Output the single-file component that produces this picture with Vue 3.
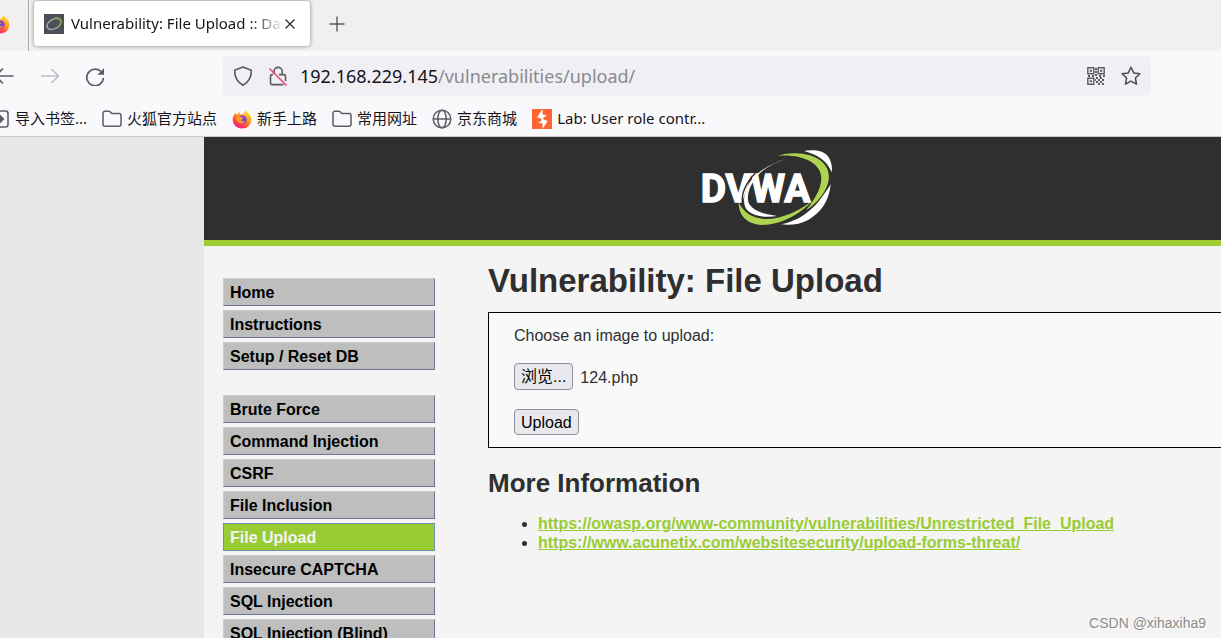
<script setup>
const bookmarks = [
  { icon: 'import', text: '导入书签...' },
  { icon: 'folder', text: '火狐官方站点' },
  { icon: 'firefox', text: '新手上路' },
  { icon: 'folder', text: '常用网址' },
  { icon: 'globe', text: '京东商城' },
  { icon: 'burp', text: 'Lab: User role contr...' },
]

const menu = [
  ['Home', 'Instructions', 'Setup / Reset DB'],
  [
    'Brute Force',
    'Command Injection',
    'CSRF',
    'File Inclusion',
    'File Upload',
    'Insecure CAPTCHA',
    'SQL Injection',
    'SQL Injection (Blind)',
  ],
]

const links = [
  'https://owasp.org/www-community/vulnerabilities/Unrestricted_File_Upload',
  'https://www.acunetix.com/websitesecurity/upload-forms-threat/',
]
</script>

<template>
  <div class="window">
    <svg class="defs" aria-hidden="true">
      <defs>
        <linearGradient id="fire" x1="0.8" y1="0" x2="0.2" y2="1">
          <stop offset="0" stop-color="#fff04a" />
          <stop offset="0.4" stop-color="#ff9a1f" />
          <stop offset="0.75" stop-color="#ff3b4e" />
          <stop offset="1" stop-color="#e6178f" />
        </linearGradient>
        <symbol id="firefox" viewBox="0 0 20 20">
          <path fill="url(#fire)" d="M3.2 4.2c.6.8 1 1.200 1.800 1.500C6 4.200 7 3.600 8 3.200c-.2 1 .1 1.700.8 2.300 1.600-.2 2.500-.6 3.200-1.500C12.600 2.800 13.200 1.500 14 .6c.4 1.800 1.400 2.800 2.600 4 2 1.800 2.900 4 2.700 6.400-.4 5-4.200 8.500-9.300 8.500S.8 15.800.7 10.800c0-2.500.9-4.800 2.500-6.600z" />
          <circle cx="10.400" cy="10.600" r="4.200" fill="#7542e5" />
          <path fill="#ff9a1f" d="M4 8.500c2-1.600 4.200-1.200 5.400-.2 1 .2 1.800.2 2.200.7-.5 1-1.800 1.100-2.400 2 .3 1.300 2.200 1.600 4 .8-1 2.200-3.200 3-5.400 2.500C5.500 13.700 4 11.500 4 8.500z" />
        </symbol>
      </defs>
    </svg>

    <header class="tabs">
      <div class="pinned">
        <svg class="icon20"><use href="#firefox" /></svg>
      </div>
      <div class="tab">
        <svg class="icon20" viewBox="0 0 20 20">
          <rect width="20" height="20" fill="#4a5058" />
          <ellipse cx="10" cy="10" rx="7.500" ry="4.800" transform="rotate(-28 10 10)" fill="none" stroke="#a4abb0" stroke-width="1.400" />
          <path d="M9 5c4-2 8-1 8 2.500 0 2-1 4-3 5.500" fill="none" stroke="#8da04e" stroke-width="1.500" />
        </svg>
        <span class="title">Vulnerability: File Upload :: Damn Vulnerable</span>
        <button class="plain close" aria-label="Close tab">
          <svg width="12" height="12" viewBox="0 0 12 12"><path d="M1.500 1.500l9 9M10.500 1.500l-9 9" stroke="#2b2a33" stroke-width="1.300" /></svg>
        </button>
      </div>
      <button class="plain" aria-label="New tab">
        <svg width="16" height="16" viewBox="0 0 16 16"><path d="M8 .5v15M.5 8h15" stroke="#5b5b66" stroke-width="1.400" /></svg>
      </button>
    </header>

    <nav class="toolbar">
      <button class="plain back" aria-label="Back">
        <svg class="icon20" viewBox="0 0 20 20"><path d="M19.500 10H1.500M9 2.500L1.500 10 9 17.500" fill="none" stroke="#5b5b66" stroke-width="1.600" /></svg>
      </button>
      <button class="plain forward" aria-label="Forward">
        <svg class="icon20" viewBox="0 0 20 20"><path d="M1 10h17.500M11.500 3l7 7-7 7" fill="none" stroke="#bdbdc4" stroke-width="1.600" /></svg>
      </button>
      <button class="plain reload" aria-label="Reload">
        <svg class="icon20" viewBox="0 0 20 20">
          <path d="M18.400 12a8.300 8.300 0 1 1-2.600-6.600" fill="none" stroke="#5b5b66" stroke-width="1.700" />
          <path d="M19 2.200v6.600h-6.600z" fill="#5b5b66" />
        </svg>
      </button>
      <div class="address">
        <svg class="icon20" viewBox="0 0 20 20"><path d="M10 1l8.300 3.300c.2 6.400-2.300 11.600-8.300 14.900C4 15.900 1.500 10.700 1.700 4.300z" fill="none" stroke="#5b5b66" stroke-width="1.600" stroke-linejoin="round" /></svg>
        <svg class="icon20 lock" viewBox="0 0 20 20">
          <path d="M6 8V5.500a4 4 0 0 1 8.200 0V8M11 8.600h5a1.500 1.500 0 0 1 1.500 1.500v5M15.500 18.600H4a1.500 1.500 0 0 1-1.500-1.500v-7A1.500 1.500 0 0 1 4 8.600h1" fill="none" stroke="#5b5b66" stroke-width="1.600" />
          <path d="M1.500 2.500l17 17" stroke="#f0426b" stroke-width="1.500" />
        </svg>
        <p class="url">192.168.229.145<span>/vulnerabilities/upload/</span></p>
        <svg class="qr" width="18" height="18" viewBox="0 0 18 18" fill="none" stroke="#5b5b66" stroke-width="1.400">
          <path d="M.8.800h6v6h-6zM11.200.800h6v6h-6zM.8 11.200h6v6h-6z" />
          <path d="M3 3h1.600v1.600H3zM13.400 3H15v1.600h-1.600zM3 13.400h1.600V15H3z" fill="#5b5b66" stroke-width=".6" />
          <path d="M8 2h2M8 5h2M1 9h2M5 9h2M8 8h2M12 9h2M16 9h2M9 11h2M13 11h2M11 13h2M15 13h2M9 15h2M13 15h2M11 17h2M15 17h2M8 13h1" stroke-width="2" />
        </svg>
        <svg class="icon20" viewBox="0 0 20 20"><path d="M10 1.200l2.700 5.700 6.200.8-4.500 4.300 1.100 6.200-5.500-3-5.500 3 1.100-6.200L1.100 7.700l6.200-.8z" fill="none" stroke="#4b4b55" stroke-width="1.500" stroke-linejoin="round" /></svg>
      </div>
    </nav>

    <nav class="bookmarks">
      <a v-for="b in bookmarks" :key="b.text" href="#">
        <svg v-if="b.icon === 'import'" class="icon20" viewBox="0 0 20 20">
          <rect x="2" y="2" width="16" height="16" rx="2.500" fill="none" stroke="#5b5b66" stroke-width="1.600" />
          <path d="M3 8h6V4.500l5.500 5.500L9 15.500V12H3z" fill="#5b5b66" />
        </svg>
        <svg v-else-if="b.icon === 'folder'" class="icon20" viewBox="0 0 20 20">
          <path d="M1 4.200a2 2 0 0 1 2-2h3.800c.7 0 1.200.2 1.600.7l1.400 1.500h7.200a2 2 0 0 1 2 2v8.800a2 2 0 0 1-2 2H3a2 2 0 0 1-2-2z" fill="none" stroke="#5b5b66" stroke-width="1.500" />
        </svg>
        <svg v-else-if="b.icon === 'firefox'" class="icon20"><use href="#firefox" /></svg>
        <svg v-else-if="b.icon === 'globe'" class="icon20" viewBox="0 0 20 20" fill="none" stroke="#5b5b66" stroke-width="1.500">
          <circle cx="10" cy="10" r="8.800" />
          <ellipse cx="10" cy="10" rx="4.200" ry="8.800" />
          <path d="M1.200 10h17.600" />
        </svg>
        <svg v-else class="icon20" viewBox="0 0 20 20">
          <rect width="20" height="20" fill="#ff6633" />
          <path d="M10.500 0L5 8.200l4.500 1.600v2L6 13.500l4.500 1v5.500l5-8-4.200-1.800V8.600l3.700-1.800-4.500-1.500z" fill="#fff" />
        </svg>
        <span>{{ b.text }}</span>
      </a>
    </nav>

    <main class="viewport">
      <div class="page">
        <div class="banner">
          <svg width="134" height="80" viewBox="60 30 402 240" role="img" aria-label="DVWA">
            <path fill="#fff" d="M372 42C396 38 432 38 447 62 456 78 457 92 455 106 446 84 430 58 372 42z" />
            <path fill="#fff" d="M452 142C448 190 424 226 386 248 360 262 330 266 304 262 350 252 384 230 412 198 430 176 442 158 452 142z" />
            <path fill="#aed351" d="M292 56C340 42 396 48 426 74 450 96 454 128 434 162 420 186 400 206 378 220 398 194 424 160 424 122 422 76 366 50 292 56z" />
            <path fill="#aed351" d="M176 196C176 232 196 262 246 264 304 264 362 230 396 192 356 222 304 248 254 246 216 244 190 226 176 196z" />
            <text class="logo-text" x="62" y="194">DVWA</text>
            <path fill="#fff" d="M318 65C282 76 234 100 212 132 188 166 186 206 204 222 226 240 262 242 292 237 250 232 222 222 208 202 196 178 210 144 232 116 256 90 286 76 318 65z" />
            <path fill="none" stroke="#2f2f2f" stroke-width="4" d="M226 108C200 136 184 168 187 196" />
          </svg>
        </div>

        <div class="columns">
          <nav class="menu">
            <ul v-for="(group, i) in menu" :key="i">
              <li v-for="item in group" :key="item">
                <a href="#" :class="{ selected: item === 'File Upload' }">{{ item }}</a>
              </li>
            </ul>
          </nav>

          <section class="body">
            <h1>Vulnerability: File Upload</h1>
            <form class="box" @submit.prevent>
              <label for="upload">Choose an image to upload:</label>
              <div class="file">
                <input id="upload" type="file" class="native" />
                <label class="btn browse" for="upload">浏览...</label>
                <span>124.php</span>
              </div>
              <button class="btn" type="submit">Upload</button>
            </form>
            <h2>More Information</h2>
            <ul class="links">
              <li v-for="l in links" :key="l"><a :href="l">{{ l }}</a></li>
            </ul>
          </section>
        </div>
      </div>
      <span class="watermark">CSDN @xihaxiha9</span>
    </main>
  </div>
</template>

<style>
body {
  margin: 0;
  overflow: hidden;
}
</style>

<style scoped>
.window {
  display: flex;
  flex-direction: column;
  height: 100vh;
  overflow: hidden;
  background: #f9f9fb;
  color: #15141a;
  font-family: "Noto Sans", "Noto Sans CJK SC", sans-serif;
  font-size: 15px;
}
.defs {
  position: absolute;
  width: 0;
  height: 0;
}
.icon20 {
  width: 20px;
  height: 20px;
  flex: none;
}
.plain {
  display: flex;
  padding: 0;
  border: 0;
  background: none;
}
.tabs {
  flex: none;
  display: flex;
  align-items: center;
  box-sizing: border-box;
  height: 51px;
  padding-bottom: 4px;
  background: #f0f0f0;
}
.pinned {
  display: flex;
  align-items: center;
  align-self: flex-start;
  width: 28px;
  height: 51px;
  border-right: 1px solid #aaaaae;
}
.pinned svg {
  margin: 0 0 4px -10px;
}
.tab {
  display: flex;
  align-items: center;
  align-self: flex-start;
  box-sizing: border-box;
  width: 276px;
  height: 45px;
  margin: 1px 19px 0 5px;
  padding: 0 14px 0 10px;
  border-radius: 4px;
  background: #fff;
  box-shadow: 0 0 4px rgba(0, 0, 0, 0.45);
}
.title {
  flex: 1;
  margin-left: 7px;
  padding-bottom: 2px;
  overflow: hidden;
  white-space: nowrap;
  -webkit-mask-image: linear-gradient(to left, transparent, #000 34px);
  mask-image: linear-gradient(to left, transparent, #000 34px);
}
.toolbar {
  flex: none;
  display: flex;
  align-items: center;
  height: 50px;
  padding-right: 70px;
}
.back {
  margin-left: -6px;
}
.forward {
  margin-left: 26px;
}
.reload {
  margin-left: 25px;
}
.address {
  flex: 1;
  display: flex;
  align-items: center;
  box-sizing: border-box;
  height: 40px;
  margin-left: 118px;
  padding: 0 10px;
  border-radius: 5px;
  background: #f0eff4;
}
.lock {
  margin-left: 15px;
}
.url {
  flex: 1;
  margin: 0 0 0 12px;
  font-size: 18px;
}
.url span {
  color: #8a8a90;
}
.qr {
  margin-right: 16px;
}
.bookmarks {
  flex: none;
  display: flex;
  align-items: center;
  gap: 15px;
  box-sizing: border-box;
  height: 36px;
  padding: 1px 0 0;
  border-bottom: 1px solid #cccccf;
}
.bookmarks a {
  display: flex;
  align-items: center;
  gap: 5px;
  color: #15141a;
  text-decoration: none;
  white-space: nowrap;
}
.bookmarks a:first-child {
  margin-left: -10px;
}
.bookmarks span {
  padding-bottom: 3px;
}
.viewport {
  flex: 1;
  position: relative;
  min-height: 0;
  overflow: hidden;
  padding-left: 204px;
  background: #e7e7e7;
  font-family: "Liberation Sans", "Noto Sans CJK SC", sans-serif;
  font-size: 16px;
  color: #2f2f2f;
}
.page {
  min-height: 100%;
  background: #f4f4f4;
}
.banner {
  display: flex;
  padding: 10px 0 13px 496px;
  border-bottom: 6px solid #a1cc33;
  background: #2f2f2f;
}
.logo-text {
  font-family: Roboto, sans-serif;
  font-size: 117px;
  font-weight: 700;
  fill: #fff;
  stroke: #fff;
  stroke-width: 4px;
}
.columns {
  display: flex;
  align-items: flex-start;
  gap: 53px;
  padding-left: 19px;
}
.menu {
  flex: none;
  width: 212px;
  padding-top: 32px;
}
.menu ul {
  display: flex;
  flex-direction: column;
  gap: 4px;
  margin: 0 0 25px;
  padding: 0;
  list-style: none;
}
.menu a {
  display: block;
  box-sizing: border-box;
  height: 28px;
  padding-left: 6px;
  border: 1px solid;
  border-color: #ccc #6b7594 #6b7594 #ccc;
  background: #bebebe;
  color: #000;
  font-weight: 700;
  line-height: 27px;
  text-decoration: none;
}
.menu a.selected {
  border-color: #7191a8;
  background: #99cc33;
  color: #f4f4f4;
}
.body {
  flex: 1;
  min-width: 0;
}
h1 {
  margin: 15px 0 12px;
  font-size: 33px;
  line-height: 39px;
}
.box {
  display: flex;
  flex-direction: column;
  align-items: flex-start;
  padding: 13px 25px 12px;
  border: 1px solid #000;
  border-right: 0;
  background: #f8fafa;
  line-height: 19px;
}
.file {
  display: flex;
  align-items: center;
  gap: 7px;
  margin: 18px 0 19px;
}
.file span {
  padding-top: 2px;
}
.native {
  position: absolute;
  width: 1px;
  height: 1px;
  opacity: 0;
}
.btn {
  box-sizing: border-box;
  height: 26px;
  padding: 1px 6px 0;
  border: 1px solid #8f8f9d;
  border-radius: 4px;
  background: #e9e9ed;
  color: #000;
  font-family: inherit;
  font-size: 16px;
  line-height: 24px;
}
.browse {
  height: 27px;
}
h2 {
  margin: 20px 0 16px;
  font-size: 26px;
  line-height: 30px;
}
.links {
  margin: 0;
  padding-left: 50px;
  line-height: 19px;
}
.links a {
  color: #99cc33;
  font-weight: 700;
}
.watermark {
  position: absolute;
  right: 15px;
  bottom: 6px;
  color: #8c8c8c;
  font-size: 14px;
  line-height: 18px;
  text-shadow: 1px 1px 0 #fff;
}
</style>
